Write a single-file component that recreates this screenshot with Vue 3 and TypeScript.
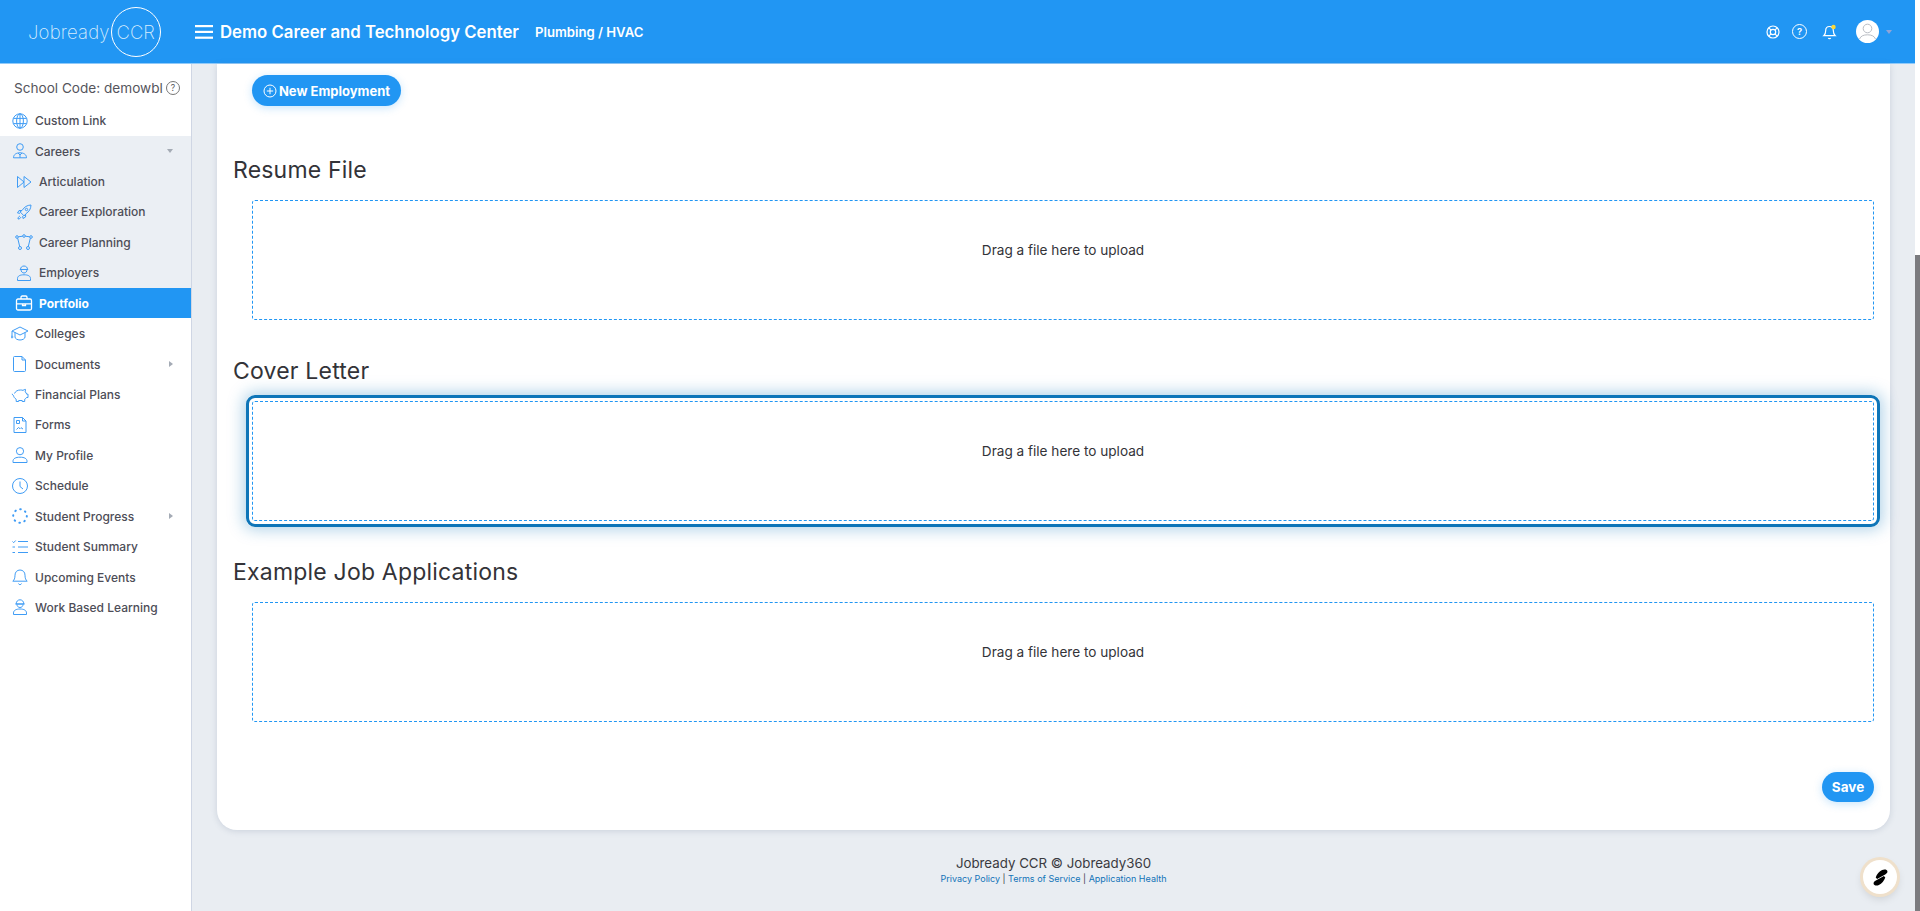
<script setup lang="ts">
interface NavItem {
  label: string
  icon: string
  sub?: boolean
  open?: boolean
  active?: boolean
  caret?: 'down' | 'right'
}

// icon bodies, drawn in an 18x18 box
const icons: Record<string, string> = {
  globe:
    '<circle cx="9" cy="9" r="7.2"/><ellipse cx="9" cy="9" rx="3.4" ry="7.2"/><path d="M2.4 6.4h13.2M2.4 11.6h13.2M9 1.8v14.4"/>',
  careers:
    '<circle cx="9" cy="5" r="3.3"/><path d="M2.5 15.8c0-3.2 2.6-5 6.5-5s6.5 1.800 6.500 5zM7 11l2 2 2-2M9 13v2.800"/>',
  articulation: '<path d="M2.500 3.500v11L9 9zM9 3.500v11L16 9z"/>',
  rocket:
    '<path d="M16 2c-4 .2-6.500 1.800-9 5.500L5 8.800l4.200 4.200 1.400-2C14.300 8.500 15.800 6 16 2zM7 7.500H4L2.500 10l2.500.3M10.600 11v3L8 15.500 7.700 13M5 13c-1.300.5-2 1.500-2 3 1.500 0 2.500-.7 3-2"/><circle cx="11.500" cy="6.500" r="1.200"/>',
  planning:
    '<circle cx="2" cy="4" r="1.300"/><circle cx="9" cy="3" r="1.300"/><circle cx="16" cy="4" r="1.300"/><circle cx="5" cy="15" r="1.500"/><circle cx="13" cy="15" r="1.500"/><path d="M3.300 3.800l4.400-.6M10.300 3.200l4.400.6M2.700 5.200l2 8.300M15.300 5.200l-2 8.300"/>',
  employers:
    '<path d="M5.500 5.500C5.500 3.300 7 2 9 2s3.500 1.300 3.500 3.500zM4.800 5.500h8.400M6 5.500c0 2 1.200 3.500 3 3.500s3-1.500 3-3.500"/><path d="M2.500 16.500v-2c0-2.500 2.500-3.700 6.500-3.700s6.500 1.200 6.500 3.700v2z"/>',
  portfolio:
    '<rect x="1.500" y="5" width="15" height="11" rx="1.500"/><path d="M6 5V3.200C6 2.500 6.500 2 7.200 2h3.600c.7 0 1.200.5 1.200 1.200V5M1.500 9.800h15M7.500 9.800v1.700h3V9.800"/>',
  colleges:
    '<path d="M9 2L1 6l8 4 8-4zM4 7.500V12c0 1.600 2.300 3 5 3s5-1.400 5-3V7.500M1 6v5"/><circle cx="1" cy="12" r=".9"/>',
  documents: '<path d="M3.500 1.500h7.500l3.500 3.500v10.500c0 .6-.4 1-1 1h-10c-.6 0-1-.4-1-1v-13c0-.6.400-1 1-1zM11 1.500V5h3.500"/>',
  piggy:
    '<path d="M3.500 7.500C4.500 5 6.800 4 9.500 4c1 0 1.700.1 2.500.4.800-.8 1.700-1 2.500-1l-.3 2.500c.8.700 1.300 1.400 1.500 2.300H17v3.300h-1.500c-.4.700-1 1.300-1.800 1.800V15.500h-2.500v-1h-3.500v1H5.200v-2.200C3.500 12.200 2.500 10.500 2.500 9.500 1.800 9.300 1.200 8.700 1.200 7.800"/>',
  forms:
    '<path d="M3 1.500h8.500L15 5v11.500H3zM11.500 1.500V5H15M5.500 4.500h3v3h-3zM5.500 13.500l2-2 1.500 1.200 1-1 2 1.300"/>',
  profile: '<circle cx="9" cy="5.200" r="3.600"/><path d="M2 16.500v-1.300c0-2.600 2.600-4 7-4s7 1.400 7 4v1.300z"/>',
  clock: '<circle cx="9" cy="9" r="7.500"/><path d="M9 4.500V9.500l3 2.500"/>',
  progress: '<circle cx="9" cy="9" r="6.800" stroke-width="2" stroke-dasharray="0.600 4.740" stroke-linecap="round"/>',
  summary:
    '<path d="M1.500 3.500l1.200 1.200 2-2.200M7 3.500h10M7 9h10M7 14.500h10M1.500 9h2.500M1.500 14.500h2.500"/>',
  bell:
    '<path d="M9 2c-3 0-5 2.200-5 5.200 0 3-.8 4.800-2.200 6h14.400c-1.400-1.200-2.200-3-2.200-6C14 4.200 12 2 9 2zM7.500 15.500c.3.800.9 1.200 1.500 1.200s1.200-.4 1.500-1.200"/>',
  worker:
    '<path d="M5.200 6C5.200 3.300 7 1.800 9 1.800S12.800 3.300 12.800 6zM4.300 6h9.400M6 6.500C6 8.200 7.200 9.500 9 9.500s3-1.300 3-3"/><path d="M2.500 16.500V15c0-2.600 2.500-4 6.500-4s6.500 1.400 6.500 4v1.500z"/>',
}

const navItems: NavItem[] = [
  { label: 'Custom Link', icon: 'globe' },
  { label: 'Careers', icon: 'careers', open: true, caret: 'down' },
  { label: 'Articulation', icon: 'articulation', sub: true, open: true },
  { label: 'Career Exploration', icon: 'rocket', sub: true, open: true },
  { label: 'Career Planning', icon: 'planning', sub: true, open: true },
  { label: 'Employers', icon: 'employers', sub: true, open: true },
  { label: 'Portfolio', icon: 'portfolio', sub: true, active: true },
  { label: 'Colleges', icon: 'colleges' },
  { label: 'Documents', icon: 'documents', caret: 'right' },
  { label: 'Financial Plans', icon: 'piggy' },
  { label: 'Forms', icon: 'forms' },
  { label: 'My Profile', icon: 'profile' },
  { label: 'Schedule', icon: 'clock' },
  { label: 'Student Progress', icon: 'progress', caret: 'right' },
  { label: 'Student Summary', icon: 'summary' },
  { label: 'Upcoming Events', icon: 'bell' },
  { label: 'Work Based Learning', icon: 'worker' },
]

const uploads = [
  { title: 'Resume File', focused: false },
  { title: 'Cover Letter', focused: true },
  { title: 'Example Job Applications', focused: false },
]
</script>

<template>
  <div class="shell">
    <div class="page">
      <header class="topbar">
        <div class="logo">
          <span class="logo-word">Jobready</span>
          <span class="logo-ring">CCR</span>
        </div>
        <svg class="burger" viewBox="0 0 18 14" width="18" height="14" fill="#fff">
          <rect width="18" height="2.200" />
          <rect y="5.800" width="18" height="2.200" />
          <rect y="11.600" width="18" height="2.200" />
        </svg>
        <span class="school">Demo Career and Technology Center</span>
        <span class="program">Plumbing / HVAC</span>
        <div class="top-icons">
          <svg class="lifebuoy" viewBox="0 0 14 14" width="14" height="14" fill="none" stroke="#fff" stroke-width="1.200">
            <circle cx="7" cy="7" r="6" />
            <circle cx="7" cy="7" r="2.700" />
            <path d="M2.800 2.800l2.300 2.300M11.200 2.800L8.900 5.100M2.800 11.200l2.300-2.300M11.200 11.200L8.900 8.900" />
          </svg>
          <span class="help">?</span>
          <svg class="bell" viewBox="0 0 16 16" width="16" height="16" fill="none" stroke="#fff" stroke-width="1.200">
            <path d="M7.500 2.500c-2.500 0-3.800 1.800-3.800 4 0 2.500-.6 4-1.900 5.200h11.400c-1.300-1.200-1.900-2.700-1.900-5.200 0-2.200-1.300-4-3.800-4zM6.300 14c.3.500.7.700 1.200.7s.9-.2 1.200-.7" />
            <circle cx="11.500" cy="3" r="2.200" fill="#fdd835" stroke="none" />
          </svg>
          <svg class="avatar" viewBox="0 0 23 23" width="23" height="23">
            <circle cx="11.500" cy="11.500" r="11.500" fill="#fff" />
            <circle cx="11.500" cy="8.500" r="4.300" fill="none" stroke="#b9bdc4" stroke-width="1" />
            <path d="M3.500 19c1.200-3 4-4.200 8-4.200s6.800 1.200 8 4.200" fill="none" stroke="#b9bdc4" stroke-width="1" />
          </svg>
          <span class="user-caret"></span>
        </div>
      </header>

      <div class="body">
        <aside class="sidebar">
          <div class="school-code">
            School Code: demowbl
            <span class="code-help">?</span>
          </div>
          <nav>
            <a
              v-for="item in navItems"
              :key="item.label"
              :class="['nav-item', { sub: item.sub, open: item.open, active: item.active }]"
            >
              <svg class="nav-icon" viewBox="0 0 18 18" width="18" height="18" v-html="icons[item.icon]"></svg>
              <span class="nav-label">{{ item.label }}</span>
              <span v-if="item.caret" :class="['caret', item.caret]"></span>
            </a>
          </nav>
        </aside>

        <main class="main">
          <section class="card">
            <button class="btn new-btn">
              <svg viewBox="0 0 14 14" width="14" height="14" fill="none" stroke="#fff" stroke-width="1">
                <circle cx="7" cy="7" r="6" />
                <path d="M7 3.800v6.400M3.800 7h6.400" />
              </svg>
              New Employment
            </button>

            <template v-for="upload in uploads" :key="upload.title">
              <h2 class="upload-title">{{ upload.title }}</h2>
              <div :class="['dropzone', { focused: upload.focused }]">Drag a file here to upload</div>
            </template>

            <div class="actions">
              <button class="btn save-btn">Save</button>
            </div>
          </section>

          <footer class="footer">
            <div class="copy">Jobready CCR © Jobready360</div>
            <div class="links">
              <a>Privacy Policy</a> | <a>Terms of Service</a> | <a>Application Health</a>
            </div>
          </footer>

          <div class="chat-bubble">
            <svg viewBox="0 0 16 16" width="17" height="17">
              <path d="M9.500 1c2.200-1 4.800-.5 5 1.200.2 1.200-.7 2-1.700 2.700L4.800 9.500 3.500 8C4.500 5 6.800 2.300 9.500 1zM6.500 15c-2.200 1-4.800.5-5-1.200-.2-1.200.7-2 1.700-2.700l8-4.600L12.500 8C11.500 11 9.200 13.700 6.500 15z" fill="#000" />
            </svg>
          </div>
        </main>
      </div>
    </div>

    <div class="scrollbar"><div class="thumb"></div></div>
  </div>
</template>

<style>
html,
body {
  margin: 0;
  height: 100%;
  overflow: hidden;
}
</style>

<style scoped>
.shell {
  display: flex;
  height: 100vh;
  font-family: Inter, 'Noto Sans', sans-serif;
  color: #333338;
  background: #fff;
}

.page {
  flex: 1;
  min-width: 0;
  display: flex;
  flex-direction: column;
}

.scrollbar {
  width: 5px;
  padding-top: 255px;
  box-sizing: border-box;
  background: #fff;
}

.thumb {
  height: 100%;
  background: #7b7b7f;
}

/* top bar */
.topbar {
  flex: none;
  height: 64px;
  box-sizing: border-box;
  display: flex;
  align-items: center;
  background: #2196f3;
  border-bottom: 1px solid #90caf9;
  color: #fff;
}

.logo {
  width: 195px;
  display: flex;
  align-items: center;
  padding-left: 28px;
  box-sizing: border-box;
  font-weight: 200;
  color: #d9edfd;
}

.logo-word {
  font-size: 18.500px;
  letter-spacing: 0.2px;
}

.logo-ring {
  width: 50px;
  height: 50px;
  margin-left: 1px;
  flex: none;
  box-sizing: border-box;
  display: flex;
  align-items: center;
  justify-content: center;
  border: 1px solid #fff;
  border-radius: 50%;
  font-size: 18.500px;
}

.burger {
  flex: none;
}

.school {
  margin-left: 7px;
  font-size: 16.750px;
  font-weight: 600;
  white-space: nowrap;
}

.program {
  margin-left: 16px;
  font-size: 13.150px;
  font-weight: 600;
  white-space: nowrap;
}

.top-icons {
  margin-left: auto;
  display: flex;
  align-items: center;
  padding-right: 23px;
}

.help {
  width: 13px;
  height: 13px;
  margin-left: 12px;
  border: 1px solid #fff;
  border-radius: 50%;
  display: flex;
  align-items: center;
  justify-content: center;
  font-size: 9.500px;
  font-weight: 600;
}

.bell {
  margin-left: 15px;
}

.avatar {
  margin-left: 18px;
}

.user-caret {
  margin-left: 7px;
  border-left: 3px solid transparent;
  border-right: 3px solid transparent;
  border-top: 4px solid #90a4d8;
}

/* sidebar */
.body {
  flex: 1;
  min-height: 0;
  display: flex;
}

.sidebar {
  flex: none;
  width: 192px;
  box-sizing: border-box;
  background: #fff;
  border-right: 1px solid #cfd6e4;
}

.school-code {
  display: flex;
  align-items: center;
  height: 28px;
  margin-top: 10px;
  padding-left: 14px;
  font-size: 13.600px;
  color: #55555c;
  white-space: nowrap;
}

.code-help {
  width: 12px;
  height: 12px;
  margin-left: 3px;
  flex: none;
  border: 1px solid #777;
  border-radius: 50%;
  display: flex;
  align-items: center;
  justify-content: center;
  font-size: 8.500px;
}

nav {
  margin-top: 3.500px;
}

.nav-item {
  display: flex;
  align-items: center;
  height: 30.430px;
  padding-left: 11px;
  font-size: 12px;
  font-weight: 500;
  color: #4d4d57;
  white-space: nowrap;
}

.nav-item.open {
  background: #ebeff4;
}

.nav-item.sub {
  padding-left: 15px;
}

.nav-item.active {
  background: #2196f3;
  color: #fff;
  font-weight: 700;
}

.nav-icon {
  flex: none;
  fill: none;
  stroke: #3f9cf5;
  stroke-width: 1;
}

.nav-item.active .nav-icon {
  stroke: #fff;
  stroke-width: 1.300;
}

.nav-label {
  margin-left: 6px;
}

.caret {
  margin-left: auto;
  margin-right: 18px;
}

.caret.down {
  border-left: 3px solid transparent;
  border-right: 3px solid transparent;
  border-top: 4px solid #a4abb5;
}

.caret.right {
  border-top: 3px solid transparent;
  border-bottom: 3px solid transparent;
  border-left: 4px solid #a4abb5;
}

/* main column */
.main {
  position: relative;
  flex: 1;
  min-width: 0;
  padding: 0 25px;
  background: #e9edf2;
}

.card {
  padding: 11px 16px 28px;
  background: #fff;
  border-radius: 0 0 20px 20px;
  box-shadow: 0 1px 6px rgba(90, 110, 140, 0.22);
}

.btn {
  display: inline-flex;
  align-items: center;
  justify-content: center;
  border: 0;
  border-radius: 16px;
  background: #2196f3;
  color: #fff;
  font-family: inherit;
  font-weight: 700;
  box-shadow: 0 2px 8px rgba(33, 150, 243, 0.25);
}

.new-btn {
  width: 149px;
  height: 31px;
  margin-left: 19px;
  gap: 2px;
  padding: 0;
  font-size: 13px;
}

.upload-title {
  margin: 36px 0 15px;
  height: 30px;
  line-height: 30px;
  font-size: 23px;
  font-weight: 400;
  letter-spacing: 0.2px;
  color: #333338;
}

.new-btn + .upload-title {
  margin-top: 49px;
}

.dropzone {
  height: 120px;
  box-sizing: border-box;
  margin-left: 19px;
  padding-top: 41px;
  border: 1px dashed #2196f3;
  border-radius: 3px;
  text-align: center;
  font-size: 13.600px;
  line-height: 16px;
  color: #333338;
}

.dropzone.focused {
  outline: 3px solid #0e75b8;
  outline-offset: 3px;
  box-shadow: 0 0 0 6px #fff, 0 0 16px 8px rgba(14, 117, 184, 0.35);
}

.actions {
  display: flex;
  justify-content: flex-end;
  margin-top: 50px;
}

.save-btn {
  width: 52px;
  height: 30px;
  padding: 0;
  font-size: 13.500px;
}

.footer {
  padding-top: 24px;
  text-align: center;
}

.copy {
  font-size: 13.300px;
  line-height: 18px;
  color: #3a3a40;
}

.links {
  font-size: 9px;
  line-height: 14px;
  color: #3a3a40;
}

.links a {
  color: #1173b8;
}

/* floating help bubble */
.chat-bubble {
  position: absolute;
  right: 18px;
  bottom: 17px;
  width: 34px;
  height: 34px;
  display: flex;
  align-items: center;
  justify-content: center;
  background: #fff;
  border-radius: 50%;
  box-shadow: 0 0 0 3px #efe0cb, 0 4px 10px rgba(0, 0, 0, 0.15);
}
</style>
